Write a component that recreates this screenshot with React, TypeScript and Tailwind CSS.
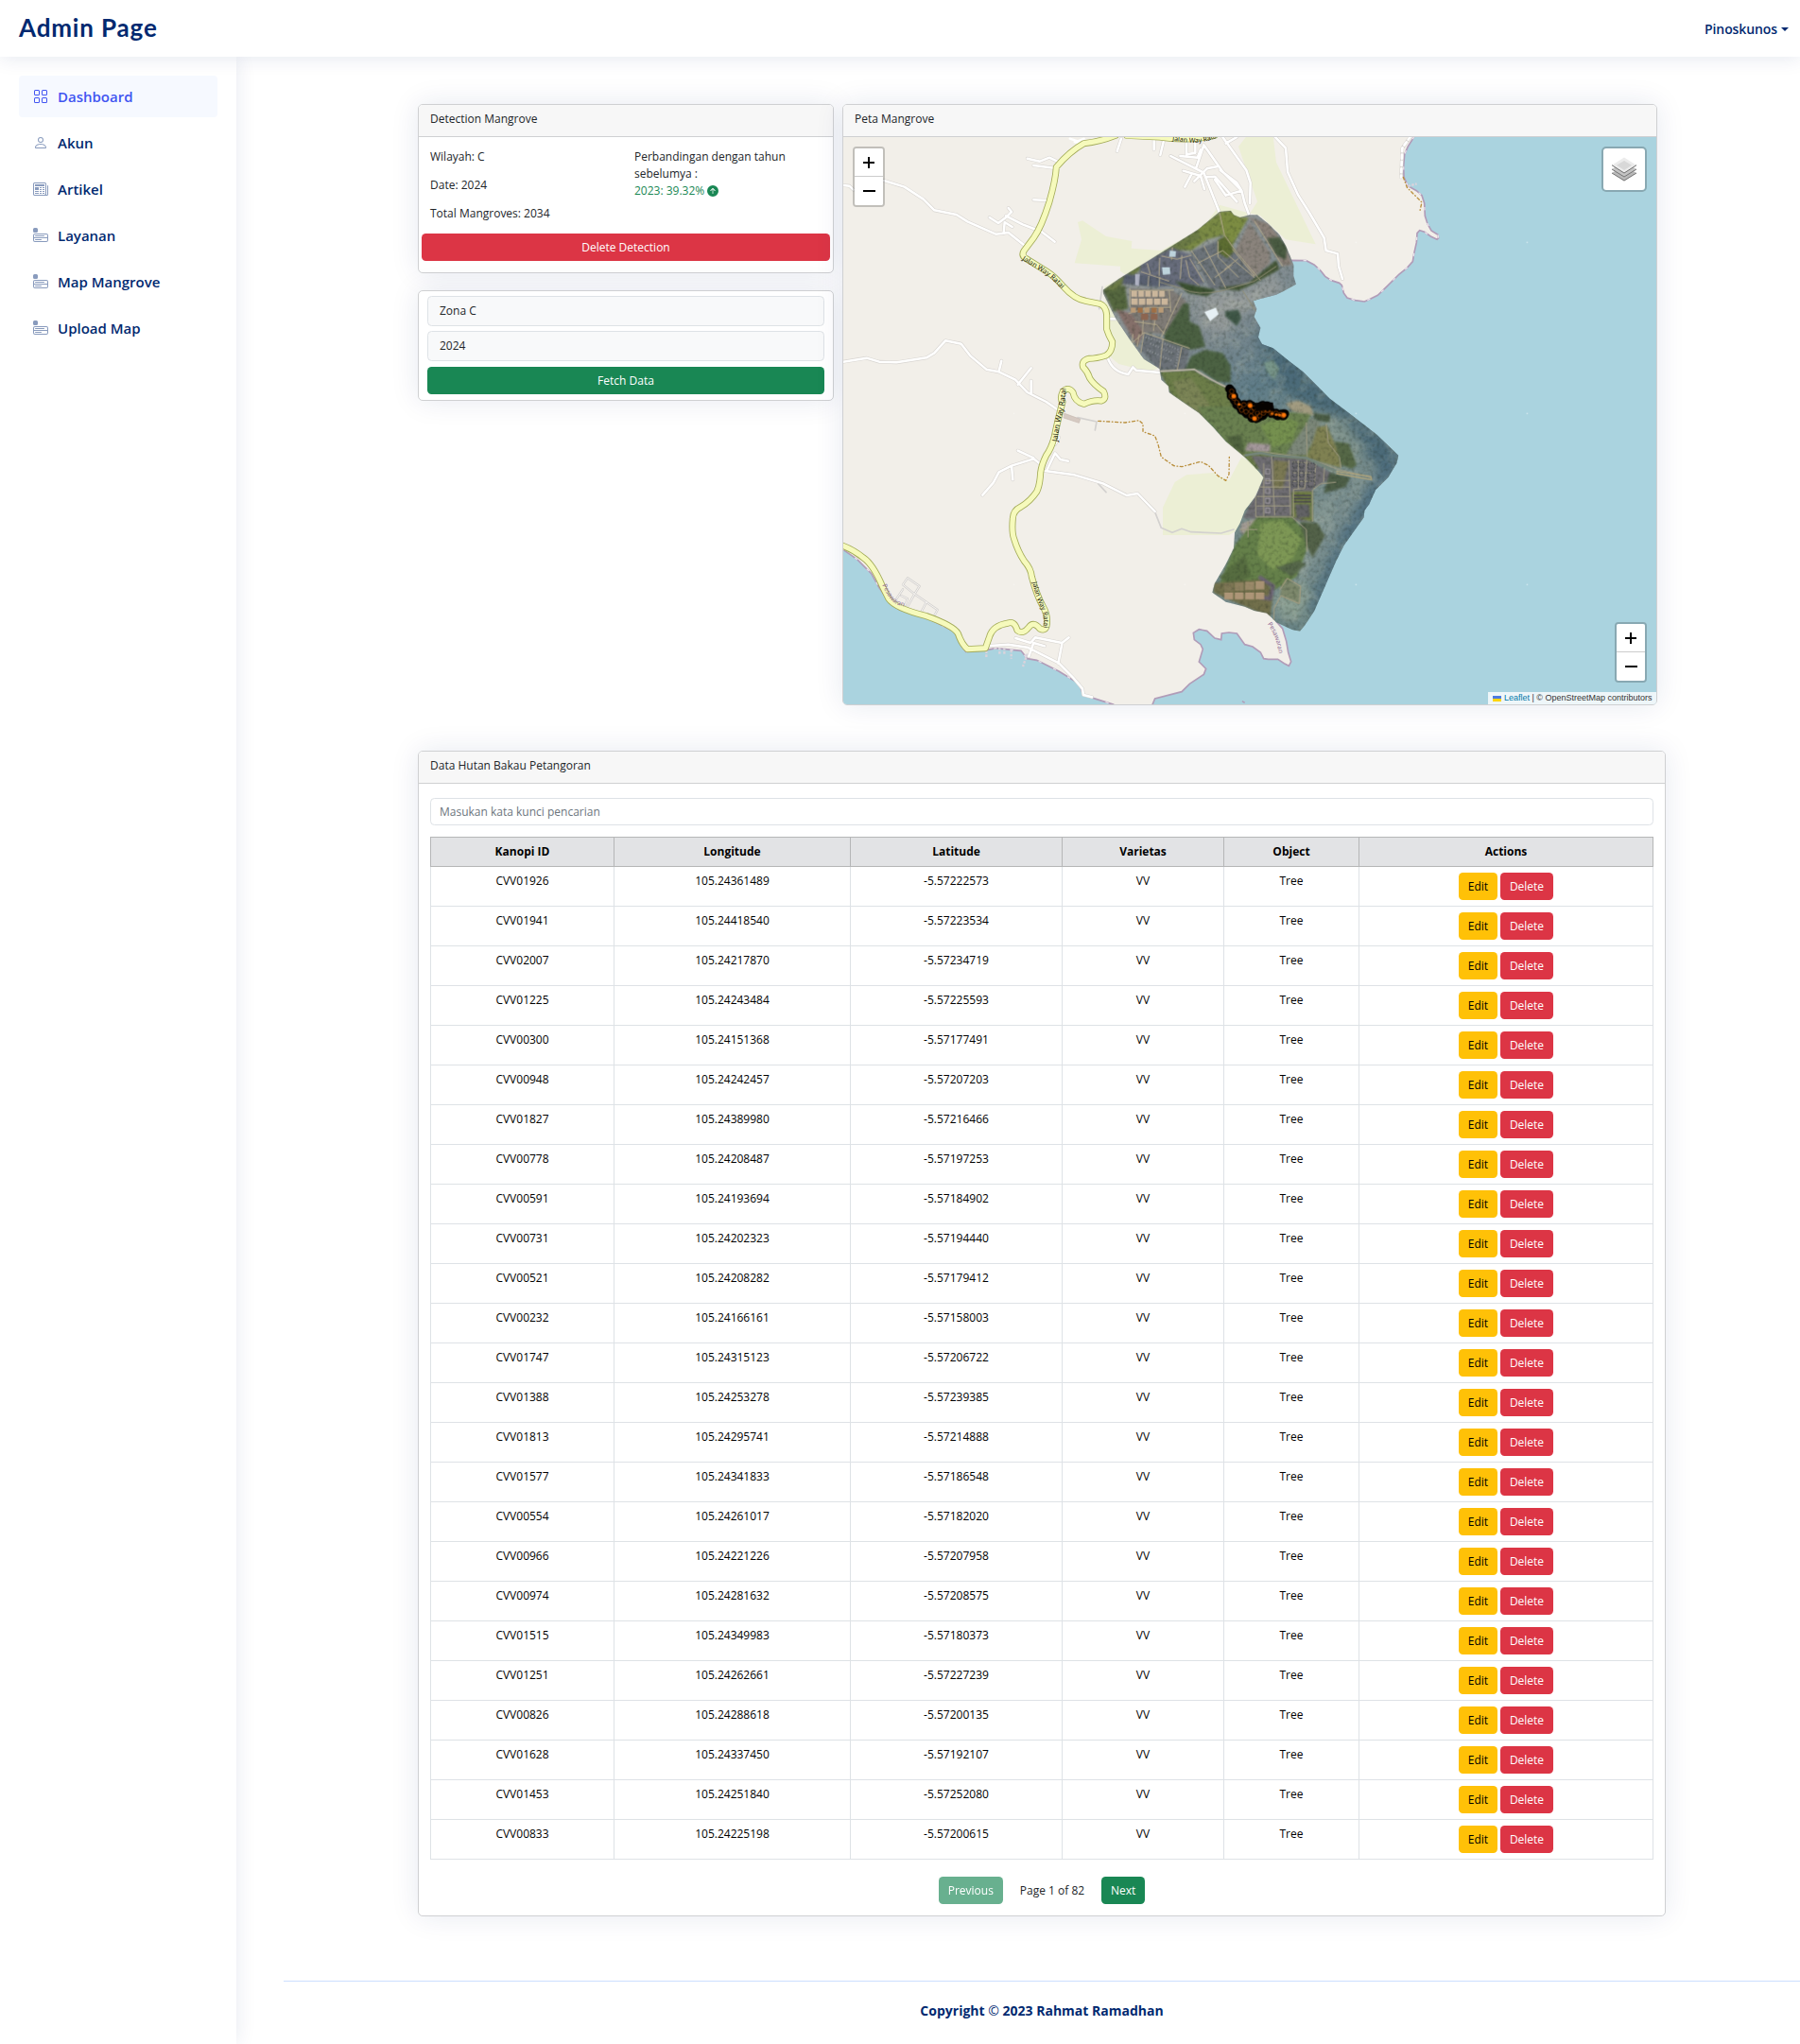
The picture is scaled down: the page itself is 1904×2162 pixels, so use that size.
import React from "react";
import {
  BsGrid,
  BsPerson,
  BsNewspaper,
  BsMenuAppFill,
  BsArrowUpCircleFill,
} from "react-icons/bs";

const NAV = [
  { label: "Dashboard", Icon: BsGrid, active: true },
  { label: "Akun", Icon: BsPerson },
  { label: "Artikel", Icon: BsNewspaper },
  { label: "Layanan", Icon: BsMenuAppFill },
  { label: "Map Mangrove", Icon: BsMenuAppFill },
  { label: "Upload Map", Icon: BsMenuAppFill },
];

const ROWS: [string, string, string][] = [
  ["CVV01926", "105.24361489", "-5.57222573"],
  ["CVV01941", "105.24418540", "-5.57223534"],
  ["CVV02007", "105.24217870", "-5.57234719"],
  ["CVV01225", "105.24243484", "-5.57225593"],
  ["CVV00300", "105.24151368", "-5.57177491"],
  ["CVV00948", "105.24242457", "-5.57207203"],
  ["CVV01827", "105.24389980", "-5.57216466"],
  ["CVV00778", "105.24208487", "-5.57197253"],
  ["CVV00591", "105.24193694", "-5.57184902"],
  ["CVV00731", "105.24202323", "-5.57194440"],
  ["CVV00521", "105.24208282", "-5.57179412"],
  ["CVV00232", "105.24166161", "-5.57158003"],
  ["CVV01747", "105.24315123", "-5.57206722"],
  ["CVV01388", "105.24253278", "-5.57239385"],
  ["CVV01813", "105.24295741", "-5.57214888"],
  ["CVV01577", "105.24341833", "-5.57186548"],
  ["CVV00554", "105.24261017", "-5.57182020"],
  ["CVV00966", "105.24221226", "-5.57207958"],
  ["CVV00974", "105.24281632", "-5.57208575"],
  ["CVV01515", "105.24349983", "-5.57180373"],
  ["CVV01251", "105.24262661", "-5.57227239"],
  ["CVV00826", "105.24288618", "-5.57200135"],
  ["CVV01628", "105.24337450", "-5.57192107"],
  ["CVV01453", "105.24251840", "-5.57252080"],
  ["CVV00833", "105.24225198", "-5.57200615"],
];

const CARD = "rounded-[5px] border border-[#cfd0d2] bg-white shadow-[0_0_30px_rgba(1,41,112,0.1)]";
const CARD_HEAD = "h-[34px] rounded-t-[4px] border-b border-[#cfd0d2] bg-[#f7f7f7] px-3 pt-1.5";
const BTN = "flex h-[29px] items-center justify-center rounded-[4.5px] leading-[18px] text-white";

/* ---------- Map drawing ---------- */

const EAST_SEA =
  "M1848 133L1828 165L1817 190L1814 225L1815 262L1828 290L1855 305L1872 320L1880 345L1882 385L1890 410L1902 432L1923 445L1925 455L1920 460L1900 450L1880 436L1865 431L1857 440L1855 470L1847 505L1843 530L1825 550L1800 570L1775 595L1750 620L1732 637L1705 650L1690 657L1660 653L1635 645L1624 630L1618 605L1610 598L1585 590L1565 577L1550 558L1530 540L1505 527L1455 526L1400 570L1315 640L1310 780L1400 1000";
const SOUTH_COAST =
  "L1410 1672L1430 1695L1442 1735L1448 1770L1457 1800L1450 1813L1435 1805L1415 1792L1385 1792L1370 1790L1360 1770L1335 1752L1310 1745L1285 1710L1260 1707L1237 1710L1235 1730L1215 1725L1190 1702L1165 1697L1147 1708L1150 1730L1170 1745L1177 1760L1165 1800L1187 1822L1180 1840L1135 1870L1110 1895L1025 1917L1017 1936";
const WEST_COAST =
  "M30 1440L80 1475L125 1520L150 1565L185 1615L215 1635L300 1660L360 1690L390 1705L402 1735L425 1768L490 1763L520 1757L600 1765L620 1790L650 1795L720 1830L785 1870L797 1905L850 1922L895 1936";
const MAIN_ROAD =
  "M900 130Q850 150 800 155Q755 180 712 230Q710 270 690 340Q665 420 640 455L610 495Q600 510 615 520L680 560Q705 575 735 610Q770 650 805 655L850 664Q870 672 872 700V745Q878 765 890 785Q890 815 870 828Q840 838 815 838Q790 845 797 865Q812 880 818 900Q830 920 862 942Q874 965 855 972Q830 968 800 982Q770 975 765 945Q750 925 733 942Q722 965 732 975Q715 1040 705 1090Q695 1125 680 1145Q665 1175 662 1200Q660 1240 650 1260Q630 1290 600 1308Q575 1320 574 1345Q570 1390 578 1410Q590 1450 610 1480Q632 1505 634 1530Q650 1590 670 1625Q685 1650 682 1680Q680 1705 660 1695Q640 1670 625 1690Q605 1715 588 1700Q580 1670 560 1677Q510 1685 500 1720L487 1757L430 1760Q412 1745 400 1710Q385 1685 300 1655Q200 1630 180 1600L160 1560Q130 1490 100 1470Q70 1445 30 1430";

const MINOR_ROADS = [
  "M165 273L230 293L290 332L325 367L395 381L430 403L520 443L560 438L610 478",
  "M36 288L55 290L68 302",
  "M500 390L528 408L552 390L570 372L560 360M552 385L605 412L665 435L707 467M545 440L548 405L572 420",
  "M620 203L660 212L690 200L715 212M640 225L705 233M640 334L680 336",
  "M905 180L918 140M1022 175V143M1042 192L1052 150",
  "M36 848L110 836L150 848L205 850L300 835L325 820L360 781L410 791L440 830L490 872L530 880L582 905L620 945L680 975L720 1003M530 878L538 845M590 920L632 868M632 950V908",
  "M875 712H900M875 835Q890 880 940 888L955 865L965 875L1040 882L1145 880",
  "M1075 195L1180 248L1230 375M1180 160L1240 245L1300 305L1310 345L1325 385M1180 160L1155 235M1125 150V190L1153 185V140M1105 195L1160 200L1170 175M1115 242L1170 258L1182 300M1120 293L1140 255M1150 275L1190 235L1225 228M1190 262L1215 260L1285 340M1215 270L1250 320L1300 305M1232 240L1285 280L1300 305M1240 135L1315 240L1328 280L1326 345M1250 155L1285 135",
  "M1405 133L1440 170L1446 245L1480 320L1515 375L1562 455L1568 495L1605 505L1608 545L1620 585",
  "M478 1271L512 1232L530 1198L570 1178L640 1156L665 1175M590 1130L640 1153M570 1178L574 1222",
  "M670 1193L770 1207L860 1234L935 1272L970 1266L1025 1323M683 1190L708 1138L725 1158L750 1163M708 1110L720 1088",
  "M490 1750L560 1745L620 1754L720 1804L765 1850L795 1885L798 1905L825 1912M583 1725L630 1740L645 1723L730 1740L752 1723M730 1743L718 1805M625 1782L640 1740L675 1750",
];

const PATCHES: [string, string][] = [
  ["390,42 425,38 455,60 482,60 430,150 405,120", "#7c8c42"],
  ["482,58 545,80 600,150 620,210 590,215 555,160 520,100", "#8b8179"],
  ["485,75 550,170 550,205 500,250 440,165", "#8a837c"],
  ["310,100 390,45 405,115 350,130 300,165 235,160", "#7a8a45"],
  ["20,290 90,275 100,350 55,360", "#55673f"],
  ["20,290 160,195 235,150 320,98 330,125 240,180 140,225 60,290", "#6b7a45"],
  ["140,205 240,155 300,180 340,270 270,285 135,240", "#676c7b"],
  ["300,170 390,130 440,165 505,255 410,290 360,285", "#6c7379"],
  ["385,130 410,118 438,165 415,190 385,170", "#5d6d32"],
  ["90,240 200,245 250,275 190,280 80,270", "#596070"],
  ["105,285 240,290 285,325 215,430 150,425 110,365", "#7f7b76"],
  ["60,350 110,365 150,425 130,470", "#85706a"],
  ["150,425 295,475 280,550 200,545 140,480", "#6b7177"],
  ["250,262 320,278 380,290 350,310 290,300", "#3d5232"],
  ["380,285 480,270 570,195 580,225 500,270 450,292", "#475838"],
  ["540,125 580,122 605,155 600,195 570,180", "#4a5b42"],
  ["275,333 293,333 295,390 325,405 345,470 300,480 215,450 215,430", "#4b6042"],
  ["345,480 400,490 425,530 425,585 380,580 330,545 280,545 300,500", "#4c6243"],
  ["200,548 310,545 370,580 420,600 490,690 640,690 680,720 680,860 350,860", "#6c7d49"],
  ["240,580 300,570 350,640 380,700 340,720 270,650", "#7b8456"],
  ["407,358 450,352 459,380 445,405 410,375", "#3f5747"],
];

const LOWER_PATCHES: [string, string][] = [
  ["200,0 330,0 560,25 530,90 480,155 350,150 240,75", "#6a8050"],
  ["400,60 470,30 520,50 500,110 440,130", "#75904f"],
  ["290,95 340,90 350,150 320,135", "#50633f"],
  ["360,115 430,120 430,145 350,140", "#a3979a"],
  ["500,120 560,35 590,50 545,155 480,155", "#7c8779"],
  ["580,65 610,60 650,150 655,195 548,165", "#7f8152"],
  ["370,155 545,165 640,220 565,260 565,365 345,355 410,225", "#6f6d72"],
  ["440,170 490,175 470,260 440,260", "#7a7853"],
  ["500,270 565,270 565,365 500,350", "#728143"],
  ["508,310 555,310 558,350 515,355", "#626265"],
  ["340,370 390,355 385,400 355,418 335,395", "#a49c95"],
  ["390,350 500,350 545,400 545,460 515,540 430,590 270,560 318,440", "#65804a"],
  ["400,370 470,360 530,420 500,490 440,520 390,470", "#7d9755"],
  ["270,540 350,470 370,540 300,570", "#566c40"],
  ["250,560 415,548 440,600 430,670 250,590", "#716f4b"],
  ["525,365 580,370 605,410 565,480 545,440", "#536249"],
  ["635,110 680,118 705,185 690,198 655,185", "#566847"],
  ["620,210 685,225 670,255 600,275", "#4d5e47"],
  ["570,20 620,30 620,48 570,40", "#4b5c45"],
  ["480,545 525,570 523,625 462,600 465,575", "#7d886c"],
  ["450,510 520,490 545,500 500,540", "#56674a"],
];

const POND_LINES =
  "M140 232L230 262M205 182L255 192L300 180M160 205L170 240M200 188L198 245M240 155L238 195M270 180L265 255M283 195L295 250L325 275M295 190L340 265M300 165L375 275M340 150L410 285M320 205L400 165L500 250M385 135L385 185L450 250M405 225L450 190M375 250L430 210M430 160L500 245M390 45L405 115L440 165L520 260M500 70L590 215M130 240L128 275M165 245L163 278M200 248L198 280M100 365L165 345L235 345M105 285L105 345M105 292L245 290M150 345L145 430M190 350L180 420M230 292L235 360M270 300L205 440M120 390L190 400L215 430M110 460L150 425L140 490M150 425L295 475M210 445L200 540M270 470L255 545M115 430L112 455M135 430L128 470";
const LOWER_POND_LINES =
  "M345 155L420 145L545 162L650 200L750 225M435 155L445 345M385 225L385 350L500 350M545 50L548 160L540 260L505 262L505 350M490 170L495 345M410 180V350M388 255H495M388 285H495M388 315H495M415 235H495M500 175L560 180M500 210H560M500 237H560M520 170V262M575 180L570 260M603 190L600 240M608 55L615 115L650 160L655 195M640 240L590 245L565 265V365M500 350L545 390L548 460M360 365V415M335 390H390";

const DETECTIONS: [number, number][] = (() => {
  const spine: [number, number][] = [
    [425, 607], [430, 625], [440, 640], [448, 655], [463, 668], [480, 682],
    [500, 697], [520, 692], [535, 678], [550, 660], [530, 658], [510, 668],
    [488, 657], [470, 655], [500, 680], [520, 675], [545, 672], [560, 682], [578, 686], [594, 686],
  ];
  const out: [number, number][] = [];
  spine.forEach(([x, y], i) => {
    const next = spine[Math.min(i + 1, spine.length - 1)];
    for (let k = 0; k < 4; k++) {
      const t = k / 4;
      out.push([x + (next[0] - x) * t + ((i * 7 + k * 5) % 7) - 3, y + (next[1] - y) * t + ((i * 5 + k * 3) % 7) - 3]);
    }
  });
  return out;
})();

function MapDrawing() {
  return (
    <svg className="block h-full w-full" viewBox="36 135 2580 1800" preserveAspectRatio="none">
      <defs>
        <clipPath id="ortho">
          <path d="M390 42L425 38L435 52L455 60L485 52L510 52L545 80L580 115L600 150L615 185L625 210L625 245L633 272L600 290L570 305L520 318L497 325L508 350L500 375L520 410L513 440L525 462L560 475L610 515L655 550L700 595L740 635L800 680L890 750L958 815L952 840L925 885L885 925L865 970L850 990L848 1012L810 1065L785 1100L760 1150L725 1230L690 1310L660 1355L645 1373L620 1368L570 1345L555 1330L540 1315L500 1308L470 1295L410 1280L367 1250L375 1220L410 1160L435 1110L438 1060L455 1030L470 990L505 945L530 885L500 850L470 820L410 770L370 725L325 680L295 660L230 615L228 595L205 575L200 540L150 510L100 440L60 380L20 300L20 290L70 255L160 200L240 150L320 100Z" />
        </clipPath>
        <linearGradient id="lagoon" x1="0.2" y1="0.1" x2="0.7" y2="1">
          <stop offset="0" stopColor="#929797" />
          <stop offset="0.25" stopColor="#7f8b90" />
          <stop offset="0.42" stopColor="#5f7c88" />
          <stop offset="0.62" stopColor="#748a88" />
          <stop offset="0.82" stopColor="#778c8e" />
          <stop offset="1" stopColor="#5f7d7f" />
        </linearGradient>
        <filter id="shade" x="0" y="0" width="100%" height="100%" colorInterpolationFilters="sRGB">
          <feTurbulence type="fractalNoise" baseFrequency="0.09" numOctaves="3" seed="4" />
          <feColorMatrix values="0 0 0 0 0.12  0 0 0 0 0.16  0 0 0 0 0.12  2.4 0 0 0 -1.15" />
        </filter>
        <filter id="glint" x="0" y="0" width="100%" height="100%" colorInterpolationFilters="sRGB">
          <feTurbulence type="fractalNoise" baseFrequency="0.025" numOctaves="4" seed="11" />
          <feColorMatrix values="0 0 0 0 0.78  0 0 0 0 0.8  0 0 0 0 0.72  2.4 0 0 0 -1.1" />
        </filter>
        <filter id="soft" x="-10%" y="-10%" width="120%" height="120%" colorInterpolationFilters="sRGB">
          <feGaussianBlur stdDeviation="3" />
        </filter>
        <filter id="haze" x="-30%" y="-30%" width="160%" height="160%" colorInterpolationFilters="sRGB">
          <feGaussianBlur stdDeviation="16" />
        </filter>
        <path id="lbl-ratai-1" d="M603 524L675 568Q712 595 760 650" />
        <path id="lbl-ratai-2" d="M716 1102Q720 1050 732 1010Q742 965 746 900" />
        <path id="lbl-ratai-3" d="M636 1548Q648 1600 664 1630Q678 1660 670 1720" />
        <path id="lbl-ratai-4" d="M1080 146L1130 152Q1180 158 1230 132" />
        <path id="lbl-pes-1" d="M160 1556Q178 1600 205 1618L260 1634" />
        <path id="lbl-pes-2" d="M1382 1680Q1412 1720 1420 1785" />
      </defs>

      <rect x="0" y="100" width="2660" height="1860" fill="#f2efe9" />
      <g fill="#ecefd5">
        <path d="M780 405L795 400L870 450L952 465L950 488L1045 495L1180 420L1230 350L1300 370L1360 385L1440 460L1535 475L1410 215L1400 133H1315L1290 165L1350 340L1300 420L1000 620L915 560V545L770 535L792 460Z" />
        <path d="M865 610L900 590L1050 860L1010 880L910 855L875 825L895 790L872 740Z" />
        <path d="M1088 1230L1125 1207L1210 1200L1260 1225L1300 1150L1380 1200L1290 1380L1260 1398L1050 1398V1310Z" />
      </g>
      <path d={EAST_SEA + SOUTH_COAST + "H2660V100H1848Z"} fill="#aad3df" />
      <path d={WEST_COAST + "H0V1440Z"} fill="#aad3df" />
      <g fill="none" stroke="#b19cb8" strokeWidth="5">
        <path d={EAST_SEA} />
        <path d={"M1450 1640" + SOUTH_COAST} />
        <path d={WEST_COAST} />
        <path d="M1302 1925L1310 1930" />
      </g>
      <g fill="none" stroke="#e8e0ea" strokeWidth="4" strokeDasharray="10 42">
        <path d={EAST_SEA} />
        <path d={WEST_COAST} />
      </g>
      <g fill="none" stroke="#d9d3dc" strokeWidth="7" strokeDasharray="8 4">
        <path d="M490 1765V1785M532 1755V1775M547 1755V1775M569 1763V1790M620 1775L606 1815M1828 291L1856 283" />
      </g>

      <g fill="none" strokeLinejoin="round" strokeLinecap="round">
        <path d="M225 1555L240 1534L278 1560L262 1585L225 1555M225 1570L205 1600M262 1585L335 1635L322 1660M300 1610L282 1645M220 1590L240 1600L232 1620M262 1585L240 1625" stroke="#d3d1cf" strokeWidth="7" />
        <path d="M225 1555L240 1534L278 1560L262 1585L225 1555M225 1570L205 1600M262 1585L335 1635L322 1660M300 1610L282 1645M220 1590L240 1600L232 1620M262 1585L240 1625" stroke="#f6f4f1" strokeWidth="3" />
        <path d="M1025 1325L1045 1375L1080 1390L1110 1378L1140 1388L1235 1392L1275 1380M780 1025L840 1038L835 1065M845 1235L870 1262M858 610L848 680" stroke="#d3d1cf" strokeWidth="5" />
        {MINOR_ROADS.map((d) => (
          <path key={"c" + d} d={d} stroke="#d8d5d1" strokeWidth="11" />
        ))}
        {MINOR_ROADS.map((d) => (
          <path key={"f" + d} d={d} stroke="#ffffff" strokeWidth="7.5" />
        ))}
        <path d="M1836 133L1810 170L1806 262" stroke="#d8d5d1" strokeWidth="11" />
        <path d="M1836 133L1810 170L1806 262" stroke="#fff" strokeWidth="8" strokeDasharray="12 10" />
        <path d="M755 140L780 148L800 140M770 150L790 155" stroke="#fff" strokeWidth="7" />
        <path d="M738 1012L788 1030L784 1042L736 1026Z" fill="#d6cac2" stroke="#c5b8b0" strokeWidth="2" />
        <g stroke="#b98f3d" strokeWidth="4" strokeDasharray="9 8 2 8">
          <path d="M845 1036L930 1041L975 1034L987 1045V1070L1025 1083L1035 1110L1045 1150L1085 1178L1110 1181L1170 1165L1195 1177L1225 1210L1250 1225L1260 1205L1261 1150" />
          <path d="M1813 262L1825 295L1850 320L1872 342L1865 372" />
        </g>
        <path d={MAIN_ROAD} stroke="#a3ab58" strokeWidth="21" />
        <path d="M935 131L1040 136Q1130 150 1215 131" stroke="#a3ab58" strokeWidth="19" />
        <path d={MAIN_ROAD} stroke="#f6fabc" strokeWidth="16" />
        <path d="M935 131L1040 136Q1130 150 1215 131" stroke="#f6fabc" strokeWidth="15" />
      </g>

      <g fontFamily="'Noto Sans', sans-serif" fontSize="25" fill="#22220f">
        <text fontSize="22"><textPath href="#lbl-ratai-1">Jalan Way Ratai</textPath></text>
        <text fontSize="24"><textPath href="#lbl-ratai-2">Jalan Way Ratai</textPath></text>
        <text fontSize="21"><textPath href="#lbl-ratai-3">Jalan Way Ratai</textPath></text>
        <text fontSize="21"><textPath href="#lbl-ratai-4">Jalan Way Ratai</textPath></text>
        <g fill="#8d6a93" fontSize="20">
          <text><textPath href="#lbl-pes-1">Pesawaran</textPath></text>
          <text fontSize="20"><textPath href="#lbl-pes-2">Pesawaran</textPath></text>
        </g>
      </g>

      <g transform="translate(840 330)">
        <g clipPath="url(#ortho)">
          <rect width="1000" height="1400" fill="url(#lagoon)" />
          <g filter="url(#haze)">
            <path d="M500 400L620 510L960 800L940 900L820 780L560 580Z" fill="#4b6a78" />
            <path d="M330 300L460 300L560 240L600 290L480 350L400 430L330 400Z" fill="#949a9a" />
            <path d="M620 650L790 700L850 800L760 900L640 720Z" fill="#7c908b" />
            <path d="M960 780L900 940L800 1090L690 1310L670 1300L780 1060L900 860Z" fill="#4b6c7f" />
            <path d="M570 1250L640 1200L680 1260L640 1340L570 1320Z" fill="#8b9f93" />
            <path d="M620 1050L740 960L700 1120L640 1220Z" fill="#899b96" />
          </g>
          <rect width="1000" height="1400" filter="url(#glint)" opacity="0.25" />
          <g filter="url(#soft)">
            {PATCHES.map(([points, fill]) => (
              <polygon key={points} points={points} fill={fill} />
            ))}
            <path d="M530 520L560 512L580 540L565 575L540 550Z" fill="#789589" />
            <path d="M600 650L640 640L680 660L690 690L620 675Z" fill="#a19b80" />
            <path d="M695 685L740 685L735 710L700 705Z" fill="#4c5f48" />
            <g transform="translate(120 660)">
              {LOWER_PATCHES.map(([points, fill]) => (
                <polygon key={points} points={points} fill={fill} />
              ))}
              <path d="M395 540L440 570L430 610L400 605" fill="none" stroke="#6b6273" strokeWidth="12" />
            </g>
          </g>
          <rect width="1000" height="1400" filter="url(#shade)" opacity="0.32" />
          <g fill="none" stroke="#b3a98c" strokeWidth="3">
            <path d={POND_LINES} />
            <path d="M115 548H200L310 542Q360 575 420 602" stroke="#b5b0a2" strokeWidth="6" />
            <path d="M200 265L270 285Q320 310 400 292L500 262L570 215M463 292L505 358" stroke="#8f8d76" />
            <g transform="translate(120 660)" stroke="#a19c83">
              <path d={LOWER_POND_LINES} />
              <path d="M350 155L400 147L440 155L545 163L640 205" stroke="#75857a" strokeWidth="8" />
              <path d="M640 205L750 222L752 232L640 212" stroke="#b0a57c" strokeWidth="4" />
              <path d="M462 580L485 545L527 570L523 625L465 600L443 640L442 680" stroke="#aa9f80" />
            </g>
          </g>
          <g fill="#cbb69b">
            {[0, 1, 2, 3, 4].map((c) => (
              <g key={c}>
                <rect x={110 + c * 22} y="293" width="18" height="19" />
                <rect x={110 + c * 24} y="317" width="20" height="20" />
                <rect x={108 + c * 22} y="346" width="16" height="16" fill={c % 2 ? "#a06f45" : "#b99a76"} />
                <rect x={142 + (c % 2) * 30} y={366} width="20" height="18" fill="#8c6550" />
              </g>
            ))}
          </g>
          <g fill="#ad9577">
            {[0, 1, 2, 3].map((c) => (
              <g key={c}>
                <rect x={405 + c * 33} y={1220 - c * 2} width="28" height="26" opacity={0.25 + c * 0.22} />
                <rect x={405 + c * 33} y={1250} width="28" height="22" />
              </g>
            ))}
          </g>
          <g fill="none" stroke="#9e99a0" strokeWidth="3">
            {[0, 1, 2, 3, 4].map((r) => (
              <rect key={r} x="536" y={858 + r * 31} width="13" height="15" />
            ))}
            {[0, 1, 2].map((r) => (
              <g key={r} stroke="#46494d" strokeWidth="4" strokeDasharray="5 3">
                <rect x="622" y={836 + r * 29} width="14" height="18" />
                <rect x="643" y={836 + r * 29} width="14" height="18" />
                <rect x="670" y={840 + r * 28} width="22" height="18" />
              </g>
            ))}
          </g>
          <g stroke="#49474f" strokeWidth="5">
            <path d="M626 942H680M626 952H680M626 962H680" />
          </g>
          <path d="M155 440L190 450L260 480L250 535M170 460L240 490M160 480L240 515" fill="none" stroke="#92979a" strokeWidth="6" strokeDasharray="3 6" />
          <path d="M207 218L232 218L234 240L210 242ZM232 165L252 167L250 185L230 184Z" fill="#bdd3dc" />
          <path d="M122 240L137 240L134 277L122 274Z" fill="#aeb1c1" />
        </g>
        <path d="M342 360L378 346L387 367L360 389Z" fill="#e6f0f4" />
        <g stroke="#000" strokeWidth="7" fill="#0c0400">
          {DETECTIONS.map(([x, y], i) => (
            <circle key={i} cx={x} cy={y} r="11" />
          ))}
        </g>
        <g fill="none" stroke="#b04f05" strokeWidth="1.6">
          {DETECTIONS.filter((_, i) => i % 3 === 1).map(([x, y], i) => (
            <circle key={i} cx={x} cy={y} r="7" />
          ))}
        </g>
        <path d="M500 648L560 648L560 670L530 672L505 675Z" fill="#060200" />
        <g fill="#ff7a0c">
          {[[435, 627], [487, 657], [501, 698], [594, 687]].map(([x, y]) => (
            <circle key={x} cx={x} cy={y} r="7" stroke="#c85a05" strokeWidth="2" />
          ))}
          {[[452, 653], [580, 687], [556, 682], [570, 685]].map(([x, y]) => (
            <circle key={x} cx={x} cy={y} r="4.5" opacity="0.85" />
          ))}
        </g>
      </g>

      <g fill="#fff">
        {[[1663, 469], [2206, 469], [577, 1012], [1120, 1012], [1663, 1012], [2206, 1012], [577, 1555], [1120, 1555], [1663, 1555], [2206, 1555]].map(
          ([x, y]) => (
            <rect key={x + "-" + y} x={x - 1.5} y={y - 1.5} width="3" height="3" />
          ),
        )}
      </g>
    </svg>
  );
}

function ZoomControl({ place }: { place: string }) {
  return (
    <div className={"absolute w-[34px] rounded-[4px] border-2 border-black/20 bg-clip-padding " + place}>
      <div className="flex h-[30px] items-center justify-center rounded-t-[2px] border-b border-[#ccc] bg-white">
        <svg width="12" height="12" viewBox="0 0 12 12" stroke="#000" strokeWidth="2">
          <path d="M6 0V12M0 6H12" />
        </svg>
      </div>
      <div className="flex h-[30px] items-center justify-center rounded-b-[2px] bg-white pl-px">
        <svg width="13" height="12" viewBox="0 0 13 12" stroke="#000" strokeWidth="2">
          <path d="M0 6H13" />
        </svg>
      </div>
    </div>
  );
}

function MapView() {
  return (
    <div className="relative h-[600px] overflow-hidden rounded-b-[4px]">
      <MapDrawing />
      <ZoomControl place="top-[10px] left-[10px]" />
      <ZoomControl place="right-[10px] bottom-[23px]" />
      <div className="absolute top-[10px] right-[10px] flex size-12 items-center justify-center rounded-[5px] border-2 border-black/20 bg-white bg-clip-padding">
        <svg width="26" height="26" viewBox="0 0 26 26">
          <path d="M0 17L13 9L26 17L13 25.5Z" fill="#b9b9b9" />
          <path d="M0 17L13 25L26 17" fill="none" stroke="#747474" strokeWidth="1" />
          <path d="M0 13L13 5L26 13L13 21.5Z" fill="#c4c4c4" />
          <path d="M0 13L13 21L26 13" fill="none" stroke="#747474" strokeWidth="1" />
          <path d="M0 8.7L13 0.5L26 8.7L13 17Z" fill="#ececec" />
          <path d="M5 8.7L13 4L21 8.7L13 14Z" fill="#d8d8d8" />
          <path d="M0 8.7L13 17L26 8.7" fill="none" stroke="#6e6e6e" strokeWidth="1" />
        </svg>
      </div>
      <div className="absolute right-0 bottom-0 flex h-[13px] w-[178px] items-center bg-white/80 pl-[5px] font-['Liberation_Sans',sans-serif] text-[9px] leading-[13px] whitespace-nowrap text-[#333]">
        <svg className="mr-[3px] shrink-0" width="9" height="6" viewBox="0 0 9 6">
          <path fill="#4c7be1" d="M0 0h9v3H0z" />
          <path fill="#ffd500" d="M0 3h9v3H0z" />
        </svg>
        <span className="text-[#0078a8]">Leaflet</span>
        <span>&nbsp;|&nbsp;© OpenStreetMap contributors</span>
      </div>
    </div>
  );
}

export default function App() {
  return (
    <div className="min-h-[2162px] bg-white font-['Open_Sans',sans-serif] text-[12px] leading-[18px] text-[#212529]">
      <header className="relative z-20 flex h-[60px] items-center justify-between bg-white pr-3 pl-5 shadow-[0_2px_20px_rgba(1,41,112,0.1)]">
        <div className="pb-[2px] font-['Lato',sans-serif] text-[26px] leading-none font-bold tracking-[0.85px] text-[#012970]">
          Admin Page
        </div>
        <div className="flex items-center pt-px text-[14px] font-semibold tracking-[-0.1px] text-[#012970]">
          Pinoskunos
          <span className="ml-1 border-x-4 border-t-4 border-x-transparent border-t-[#012970]" />
        </div>
      </header>

      <div className="flex h-[2102px]">
        <aside className="z-10 w-[250px] shrink-0 bg-white p-5 shadow-[0_0_20px_rgba(1,41,112,0.1)]">
          <nav className="flex flex-col gap-[5px]">
            {NAV.map(({ label, Icon, active }) => (
              <a
                key={label}
                className={
                  "flex h-11 items-center rounded-[4px] pl-[15px] text-[15px] font-semibold " +
                  (active ? "bg-[#f6f9ff] text-[#4154f1]" : "text-[#012970]")
                }
              >
                <Icon className={"mr-[10px] size-4 " + (active ? "text-[#4154f1]" : "text-[#899bbd]")} />
                {label}
              </a>
            ))}
          </nav>
        </aside>

        <div className="ml-[50px] flex flex-1 flex-col">
          <main className="mx-auto w-[1320px] pt-[50px]">
            <div className="flex gap-[9px]">
              <div className="w-[440px]">
                <section className={"h-[179px] " + CARD}>
                  <div className={CARD_HEAD}>Detection Mangrove</div>
                  <div className="grid h-[102px] grid-cols-2 pt-3">
                    <div className="flex flex-col gap-3 pl-3">
                      <p>Wilayah: C</p>
                      <p>Date: 2024</p>
                      <p>Total Mangroves: 2034</p>
                    </div>
                    <div className="pr-3 pl-[9px]">
                      <p>
                        Perbandingan dengan tahun
                        <br />
                        sebelumya :
                      </p>
                      <p className="flex items-center gap-[3px] text-[#198754]">
                        2023: 39.32%
                        <BsArrowUpCircleFill className="size-3" />
                      </p>
                    </div>
                  </div>
                  <div className="px-[3px]">
                    <button className={"w-full bg-[#dc3545] " + BTN}>Delete Detection</button>
                  </div>
                </section>

                <section className={"mt-[18px] flex h-[117px] flex-col px-[9px] pt-[5px] " + CARD}>
                  <div className="flex h-8 items-center rounded-[4.5px] border border-[#dee2e6] bg-[#f8f9fa] px-3">Zona C</div>
                  <div className="mt-[5px] flex h-8 items-center rounded-[4.5px] border border-[#dee2e6] bg-[#f8f9fa] px-3">2024</div>
                  <button className={"mt-[6px] bg-[#198754] " + BTN}>Fetch Data</button>
                </section>
              </div>

              <section className={"h-[636px] w-[862px] " + CARD}>
                <div className={CARD_HEAD}>Peta Mangrove</div>
                <MapView />
              </section>
            </div>

            <section className={"mt-[48px] h-[1233px] " + CARD}>
              <div className={CARD_HEAD}>Data Hutan Bakau Petangoran</div>
              <div className="px-3 pt-[15px]">
                <input
                  className="block h-[29px] w-full rounded-[4.5px] border border-[#dee2e6] px-[9px] placeholder:text-[#6c757d]"
                  placeholder="Masukan kata kunci pencarian"
                />
                <table className="mt-3 w-[1294px] table-fixed border-collapse text-center text-black">
                  <colgroup>
                    <col className="w-[194px]" />
                    <col className="w-[250px]" />
                    <col className="w-[224px]" />
                    <col className="w-[171px]" />
                    <col className="w-[143px]" />
                    <col className="w-[311px]" />
                  </colgroup>
                  <thead>
                    <tr className="h-[31px] bg-[#e2e3e5]">
                      {["Kanopi ID", "Longitude", "Latitude", "Varietas", "Object", "Actions"].map((h) => (
                        <th key={h} className="border border-[#b5b6b7] p-0 font-bold">
                          {h}
                        </th>
                      ))}
                    </tr>
                  </thead>
                  <tbody>
                    {ROWS.map(([id, lng, lat]) => (
                      <tr key={id} className="h-[42px]">
                        {[id, lng, lat, "VV", "Tree"].map((v, i) => (
                          <td key={i} className="border border-[#dee2e6] px-0 pt-1.5 pb-0 align-top">
                            {v}
                          </td>
                        ))}
                        <td className="border border-[#dee2e6] px-0 pt-1.5 pb-0 align-top">
                          <div className="flex justify-center gap-[3px]">
                            <button className="flex h-[29px] w-[41px] items-center justify-center rounded-[4.5px] bg-[#ffc107] text-black">
                              Edit
                            </button>
                            <button className={"w-[56px] bg-[#dc3545] " + BTN}>Delete</button>
                          </div>
                        </td>
                      </tr>
                    ))}
                  </tbody>
                </table>
                <div className="mt-[18px] flex items-center justify-center gap-[18px]">
                  <button className={"w-[68px] bg-[#198754] opacity-65 " + BTN}>Previous</button>
                  <span>Page 1 of 82</span>
                  <button className={"w-[46px] bg-[#198754] " + BTN}>Next</button>
                </div>
              </div>
            </section>
          </main>

          <footer className="mt-auto h-[67px] border-t border-[#cddfff] pt-5 text-center text-[14px] leading-[21px] font-bold text-[#012970]">
            Copyright <span className="font-normal">©</span> 2023 Rahmat Ramadhan
          </footer>
        </div>
      </div>
    </div>
  );
}
